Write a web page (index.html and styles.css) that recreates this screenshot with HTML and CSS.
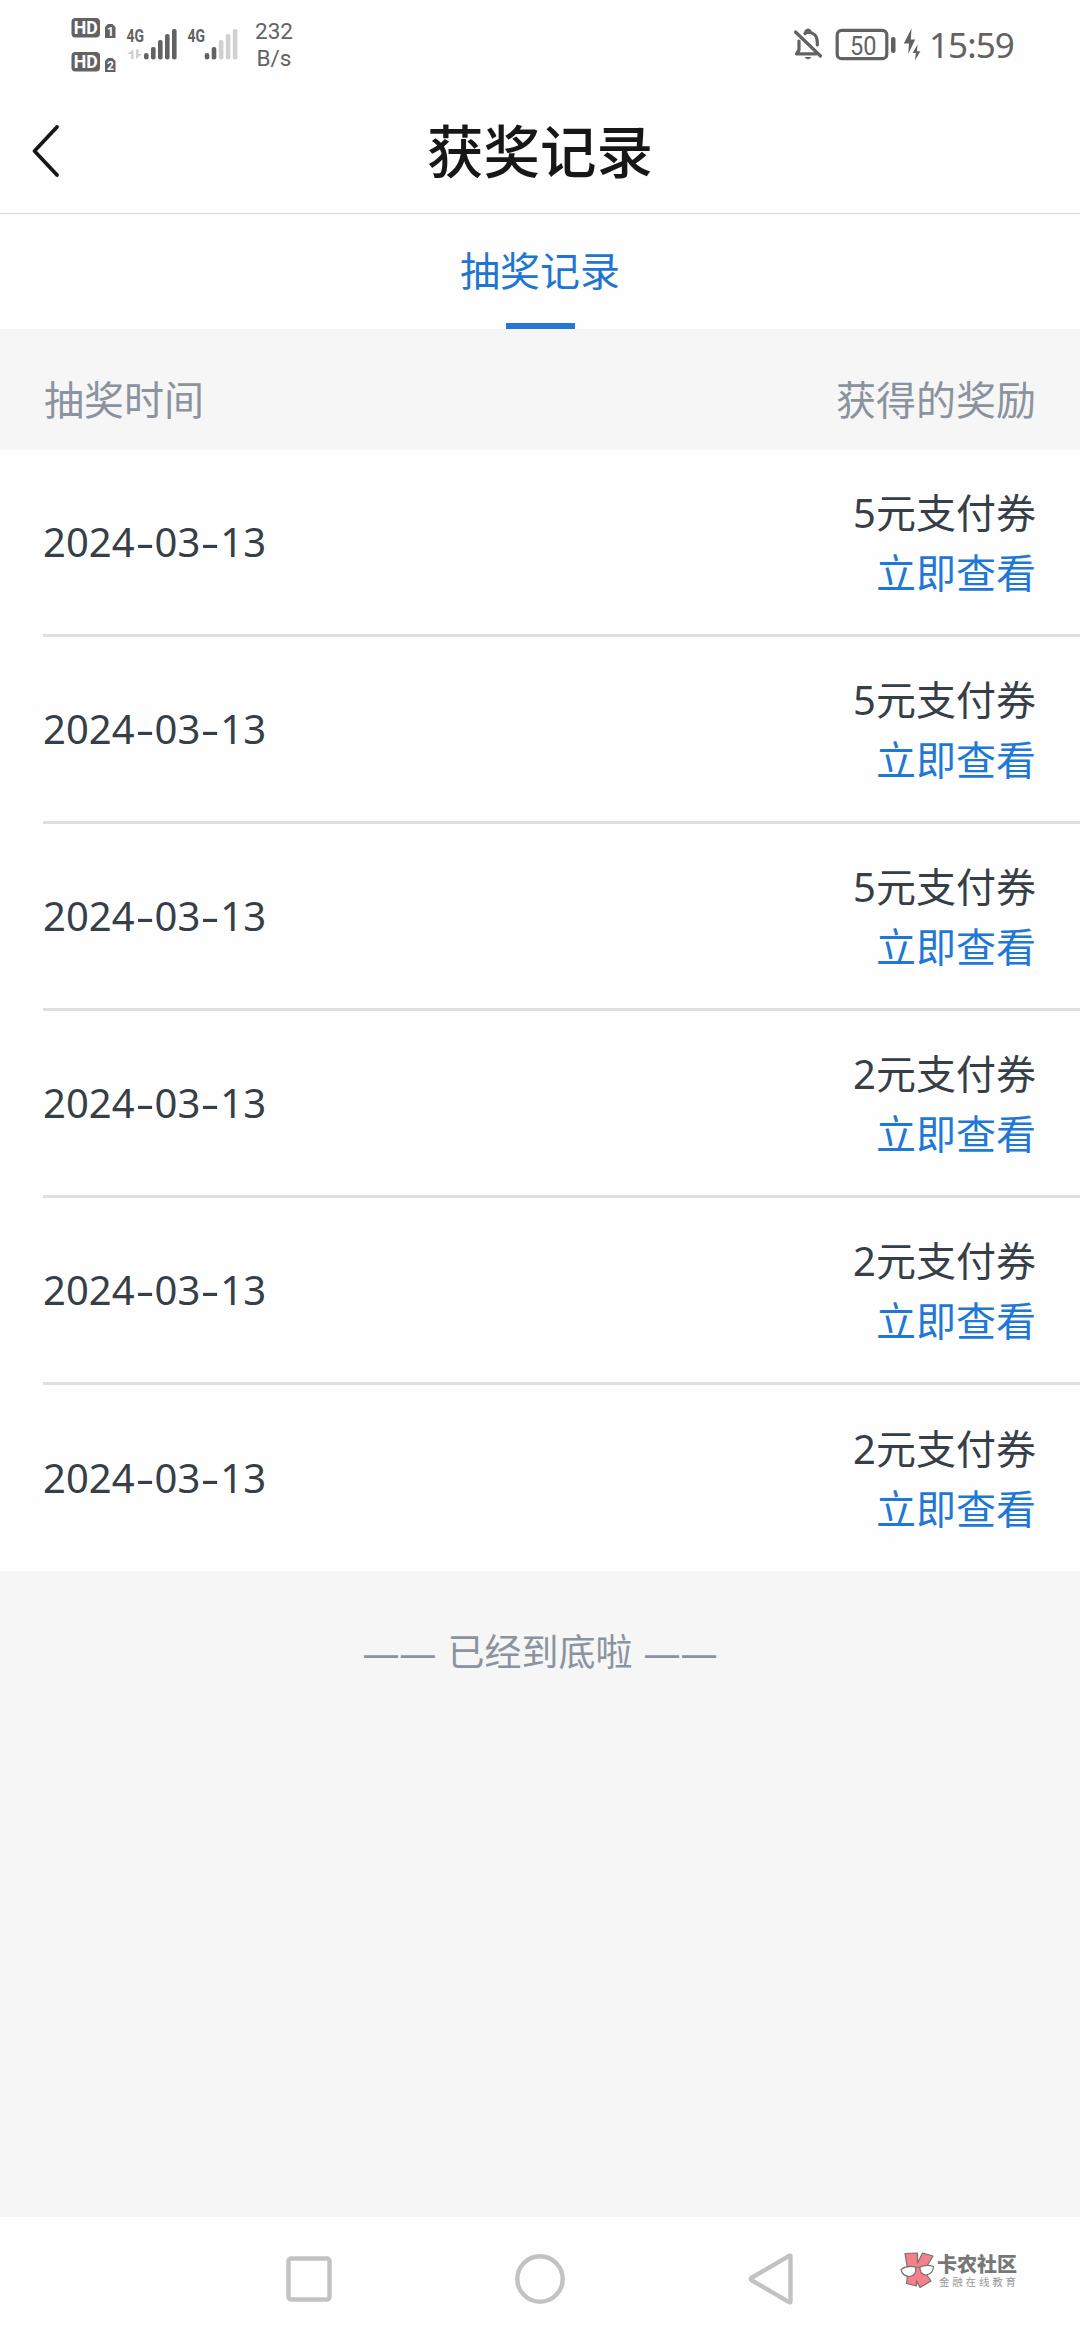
FILE: index.html
```html
<!DOCTYPE html>
<html lang="zh-CN">
<head>
<meta charset="utf-8">
<title>获奖记录</title>
<link rel="stylesheet" href="styles.css">
</head>
<body>
<div class="screen">
  <div class="status">
    <svg class="status-left" width="180" height="90" viewBox="60 0 180 90">
      <g fill="#626262">
        <rect x="71.5" y="18" width="28.5" height="19.500" rx="4"/>
        <rect x="71.500" y="52" width="28.500" height="19.500" rx="4"/>
        <path d="M105 27l3-3h4.500l3 3v11h-10.500zM105 61l3-3h4.500l3 3v11h-10.500z"/>
        <rect x="144" y="53" width="4.600" height="6.500" rx="2.200"/>
        <rect x="151" y="47" width="4.600" height="12.500" rx="2"/>
        <rect x="158" y="40" width="4.600" height="19.500" rx="2"/>
        <rect x="165" y="34" width="4.600" height="25.500" rx="2"/>
        <rect x="172" y="29" width="4.600" height="30.500" rx="2"/>
        <rect x="204.700" y="53" width="4.600" height="6.500" rx="2.200"/>
        <rect x="211.700" y="47" width="4.600" height="12.500" rx="2"/>
      </g>
      <g fill="#d0d0d0">
        <rect x="218.800" y="40" width="4.600" height="19.500" rx="2"/>
        <rect x="225.800" y="34" width="4.600" height="25.500" rx="2"/>
        <rect x="232.800" y="29" width="4.600" height="30.500" rx="2"/>
        <path d="M133.500 49.500v9.500h-2.500v-5h-4zM136 49.500v9.500l6-5h-3.500v-4.500z"/>
      </g>
      <g class="hd">
        <text x="73.800" y="34.200" textLength="24" lengthAdjust="spacingAndGlyphs">HD</text>
        <text x="73.800" y="68.200" textLength="24" lengthAdjust="spacingAndGlyphs">HD</text>
      </g>
      <g class="sim"><text x="107" y="36">1</text><text x="107" y="70">2</text></g>
      <g class="net">
        <text x="126.500" y="42" textLength="17.500" lengthAdjust="spacingAndGlyphs">4G</text>
        <text x="187.500" y="42" textLength="17.500" lengthAdjust="spacingAndGlyphs">4G</text>
      </g>
    </svg>
    <div class="speed">232<br>B/s</div>
    <svg class="status-right" width="140" height="90" viewBox="785 0 140 90">
      <g fill="none" stroke="#626262" stroke-width="3.200" stroke-linecap="round" stroke-linejoin="round">
        <path d="M795.500 32L820.500 56M799 41V50L796.500 53.800H816M805 33.500C806 32.500 807 32.200 808.500 32.200C814 32.800 817.300 36.500 817.300 41.500V45"/>
        <path d="M806 31.500Q808 28.500 810 31.500"/>
        <rect x="837.200" y="30.300" width="49.600" height="28.400" rx="4.500"/>
      </g>
      <path d="M804.500 57h7q-3.500 4.500-7 0z" fill="#626262"/>
      <rect x="891" y="37" width="4.500" height="16" rx="2" fill="#626262"/>
      <path d="M911.500 28.500L903.800 43.500H909L908.200 54L915.200 39.500H910.800zM917.500 44.500L912.600 53H915.800L915 60.500L920.400 51.300H917z" fill="#626262"/>
      <text class="charge" x="850" y="55" textLength="26.500" lengthAdjust="spacingAndGlyphs">50</text>
    </svg>
    <div class="clock">15:59</div>
  </div>

  <header class="titlebar">
    <svg class="back" width="40" height="60" viewBox="0 0 40 60"><path d="M27 7L4.500 31L27 55" fill="none" stroke="#171717" stroke-width="3.800" stroke-linecap="round" stroke-linejoin="round"/></svg>
    <h1 class="title">获奖记录</h1>
  </header>

  <nav class="tabs"><div class="tab">抽奖记录</div></nav>

  <div class="thead"><span>抽奖时间</span><span>获得的奖励</span></div>

  <ul class="list">
    <li class="row"><span class="date">2024<i>-</i>03<i>-</i>13</span><div class="prize"><span>5元支付券</span><a class="link">立即查看</a></div></li>
    <li class="row"><span class="date">2024<i>-</i>03<i>-</i>13</span><div class="prize"><span>5元支付券</span><a class="link">立即查看</a></div></li>
    <li class="row"><span class="date">2024<i>-</i>03<i>-</i>13</span><div class="prize"><span>5元支付券</span><a class="link">立即查看</a></div></li>
    <li class="row"><span class="date">2024<i>-</i>03<i>-</i>13</span><div class="prize"><span>2元支付券</span><a class="link">立即查看</a></div></li>
    <li class="row"><span class="date">2024<i>-</i>03<i>-</i>13</span><div class="prize"><span>2元支付券</span><a class="link">立即查看</a></div></li>
    <li class="row"><span class="date">2024<i>-</i>03<i>-</i>13</span><div class="prize"><span>2元支付券</span><a class="link">立即查看</a></div></li>
  </ul>

  <div class="end">—— 已经到底啦 ——</div>

  <footer class="sysnav">
    <svg width="54" height="54" viewBox="0 0 54 54"><rect x="6.500" y="6.500" width="41" height="41" rx="2.500"/></svg>
    <svg width="54" height="54" viewBox="0 0 54 54"><circle cx="27" cy="27" r="22.700"/></svg>
    <svg width="54" height="54" viewBox="0 0 54 54"><path d="M46.500 4.500V49.500Q46.500 51 45 50L8 28.500Q5.500 27 8 25.500L45 4Q46.500 3 46.500 4.500z"/></svg>
    <div class="brand">
      <svg class="brand-mark" width="36" height="38" viewBox="0 0 36 38">
        <g stroke="#77706f" stroke-width="1.200" stroke-linejoin="round">
          <path d="M5 1.500L17.500 1V11L22.500 1L33 4L24 19L31 29L20 35.500L16.500 29V34L6.500 31.500L8 20z" fill="#f4808b"/>
          <path d="M1 17.500Q7 13 15.500 15Q17 23.500 9.500 24.500Q2.500 24.500 1 17.500zM20 15Q27 12 33.500 14.500Q33 22.500 25.500 23Q19.500 22 20 15z" fill="#fff"/>
          <path d="M15.500 15.500Q18 14.500 20 15.500" fill="none"/>
        </g>
      </svg>
      <div class="brand-text"><span class="brand-name">卡农社区</span><span class="brand-sub">金融在线教育</span></div>
    </div>
  </footer>
</div>
</body>
</html>
```
FILE: styles.css
```css
* { box-sizing: border-box; }
body {
  margin: 0;
  background: #fefefe;
  font-family: "Noto Sans", "Noto Sans CJK SC", sans-serif;
}
.screen {
  width: 1080px;
  height: 2340px;
  display: flex;
  flex-direction: column;
  background: #f6f6f6;
  overflow: hidden;
}
.status {
  height: 90px;
  flex: none;
  display: flex;
  background: #fefefe;
  color: #626262;
  padding-left: 60px;
}
.status-left, .status-right { flex: none; }
.hd { font: bold 18px Roboto, sans-serif; fill: #fff; }
.sim { font: bold 12px Roboto, sans-serif; fill: #fff; }
.net { font: bold 18px Roboto, sans-serif; fill: #626262; }
.charge { font: 26px Roboto, sans-serif; fill: #626262; }
.speed {
  width: 68px;
  padding-top: 18px;
  font: 22.5px/27px Roboto, sans-serif;
  text-align: center;
}
.status-right { margin-left: 477px; }
.clock {
  margin-left: 4px;
  font-size: 35px;
  line-height: 90px;
  letter-spacing: -0.9px;
}
.titlebar {
  height: 124px;
  flex: none;
  display: grid;
  grid-template-columns: 160px 1fr 160px;
  align-items: center;
  padding-bottom: 3px;
  background: #fefefe;
  border-bottom: 1px solid #d6d9db;
}
.back { margin: 0 0 0 30px; }
.title {
  margin: 0;
  padding-bottom: 5px;
  text-align: center;
  font: 500 56.5px/80px "Noto Sans CJK SC", sans-serif;
  color: #171717;
}
.tabs {
  height: 115px;
  flex: none;
  display: flex;
  justify-content: center;
  background: #fefefe;
}
.tab {
  display: flex;
  flex-direction: column;
  align-items: center;
  justify-content: space-between;
  color: #1f76d2;
  font-size: 40px;
  line-height: 113px;
}
.tab::after {
  content: "";
  width: 69px;
  height: 6px;
  margin-top: -4px;
  background: #2478d4;
}
.thead {
  height: 121px;
  flex: none;
  display: flex;
  justify-content: space-between;
  padding: 0 44px;
  font-size: 40px;
  line-height: 142px;
  color: #8b939f;
}
.list {
  margin: 0;
  padding: 0 0 0 43px;
  list-style: none;
  background: #fefefe;
  flex: none;
}
.row {
  height: 187px;
  display: flex;
  justify-content: space-between;
  align-items: center;
  padding-right: 44px;
  border-bottom: 3px solid #dfdfdf;
  color: #363f48;
  font-size: 40px;
  line-height: 60px;
}
.row:last-child { border-bottom: 0; height: 186px; }
.date i {
  display: inline-block;
  width: 20px;
  text-align: center;
  font-style: normal;
  transform: scaleX(1.45);
}
.prize {
  display: flex;
  flex-direction: column;
  align-items: flex-end;
  padding-top: 2px;
}
.link { color: #1f78d5; }
.end {
  flex: 1;
  padding-top: 51px;
  text-align: center;
  font-size: 37px;
  line-height: 60px;
  word-spacing: 1.5px;
  color: #8b939f;
}
.sysnav {
  position: relative;
  height: 123px;
  flex: none;
  display: flex;
  justify-content: center;
  gap: 177px;
  padding-top: 35px;
  background: #fefefe;
}
.sysnav > svg { fill: none; stroke: #c2c2c2; stroke-width: 4.4px; }
.brand {
  position: absolute;
  left: 900px;
  top: 35px;
  display: flex;
  gap: 1px;
}
.brand-text { display: flex; flex-direction: column; padding-top: 1px; white-space: nowrap; }
.brand-name { font: 900 20px/22px "Noto Sans CJK SC", sans-serif; color: #777; }
.brand-sub { font: 10.5px/14px "Noto Sans CJK SC", sans-serif; letter-spacing: 2.8px; color: #999; padding-left: 2px; }
```
